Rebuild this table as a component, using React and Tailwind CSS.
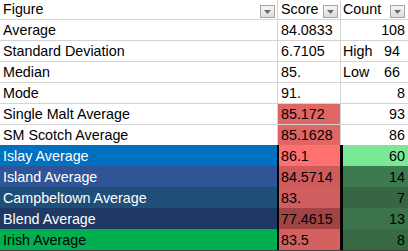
import React from "react";

function FilterBtn() {
  return (
    <div className="w-[15px] h-[13px] border border-[#a6a6a6] bg-gradient-to-b from-[#f7f7f7] to-[#dcdcdc] flex items-center justify-center">
      <svg width="7" height="4" viewBox="0 0 7 4">
        <polygon points="0,0 7,0 3.5,4" fill="#6b6b6b" />
      </svg>
    </div>
  );
}

const upper = [
  { f: "Average", s: "84.0833", c: "108" },
  { f: "Standard Deviation", s: "6.7105", c: "94", l: "High" },
  { f: "Median", s: "85.", c: "66", l: "Low" },
  { f: "Mode", s: "91.", c: "8" },
  { f: "Single Malt Average", s: "85.172", c: "93", sb: "bg-[#e06666]" },
  { f: "SM Scotch Average", s: "85.1628", c: "86", sb: "bg-[#e06666]" },
];

const lower = [
  { f: "Islay Average", s: "86.1", c: "60", fb: "bg-[#0070c0]", ft: "text-white", sb: "bg-[#ff7070]", cb: "bg-[#7ae896]" },
  { f: "Island Average", s: "84.5714", c: "14", fb: "bg-[#2f5597]", ft: "text-white", sb: "bg-[#cf5c5c]", cb: "bg-[#3e7a50]" },
  { f: "Campbeltown Average", s: "83.", c: "7", fb: "bg-[#1f4e79]", ft: "text-white", sb: "bg-[#d05e5e]", cb: "bg-[#366642]" },
  { f: "Blend Average", s: "77.4615", c: "13", fb: "bg-[#203864]", ft: "text-white", sb: "bg-[#a24444]", cb: "bg-[#3c734b]" },
  { f: "Irish Average", s: "83.5", c: "8", fb: "bg-[#00b050]", ft: "text-black", sb: "bg-[#d56060]", cb: "bg-[#376944]" },
];

export default function App() {
  return (
    <div
      className="w-[408px] h-[251px] overflow-hidden bg-white text-black text-[14.3px] leading-[17px]"
      style={{ fontFamily: '"Liberation Sans", Arial, sans-serif' }}
    >
      {/* header */}
      <div className="flex h-[19px]">
        <div className="w-[278px] border-r border-[#d4d4d4] flex items-end justify-between pl-[3px] pr-[2px] pb-[1px]">
          <span>Figure</span>
          <div><FilterBtn /></div>
        </div>
        <div className="w-[63px] border-r border-[#d4d4d4] flex items-end justify-between pl-[3px] pr-[2px] pb-[1px]">
          <span>Score</span>
          <div><FilterBtn /></div>
        </div>
        <div className="flex-1 flex items-end justify-between pl-[2px] pr-[3px] pb-[1px]">
          <span>Count</span>
          <div><FilterBtn /></div>
        </div>
      </div>

      {upper.map((r) => (
        <div key={r.f} className="flex h-[21px] border-t border-[#d4d4d4]">
          <div className="w-[278px] border-r border-[#d4d4d4] flex items-end pl-[3px] pb-[1px]">{r.f}</div>
          <div className={`w-[63px] border-r border-[#d4d4d4] flex items-end pl-[3px] pb-[1px] ${r.sb || ""}`}>{r.s}</div>
          <div className={`flex-1 flex items-end pb-[1px] ${r.l ? "justify-between pl-[2px] pr-[8px]" : "justify-end pr-[3px]"}`}>
            {r.l && <span>{r.l}</span>}
            <span>{r.c}</span>
          </div>
        </div>
      ))}

      {lower.map((r) => (
        <div key={r.f} className="flex h-[21px]">
          <div className={`w-[277px] flex items-end pl-[3px] pb-[1px] ${r.fb} ${r.ft}`}>{r.f}</div>
          <div className={`w-[66px] border-l-2 border-r-[3px] border-black flex items-end pl-[2px] pb-[1px] ${r.sb}`}>{r.s}</div>
          <div className={`flex-1 flex items-end justify-end pr-[3px] pb-[1px] ${r.cb}`}>{r.c}</div>
        </div>
      ))}
      <div className="h-[1px] bg-[#404040]" />
    </div>
  );
}
